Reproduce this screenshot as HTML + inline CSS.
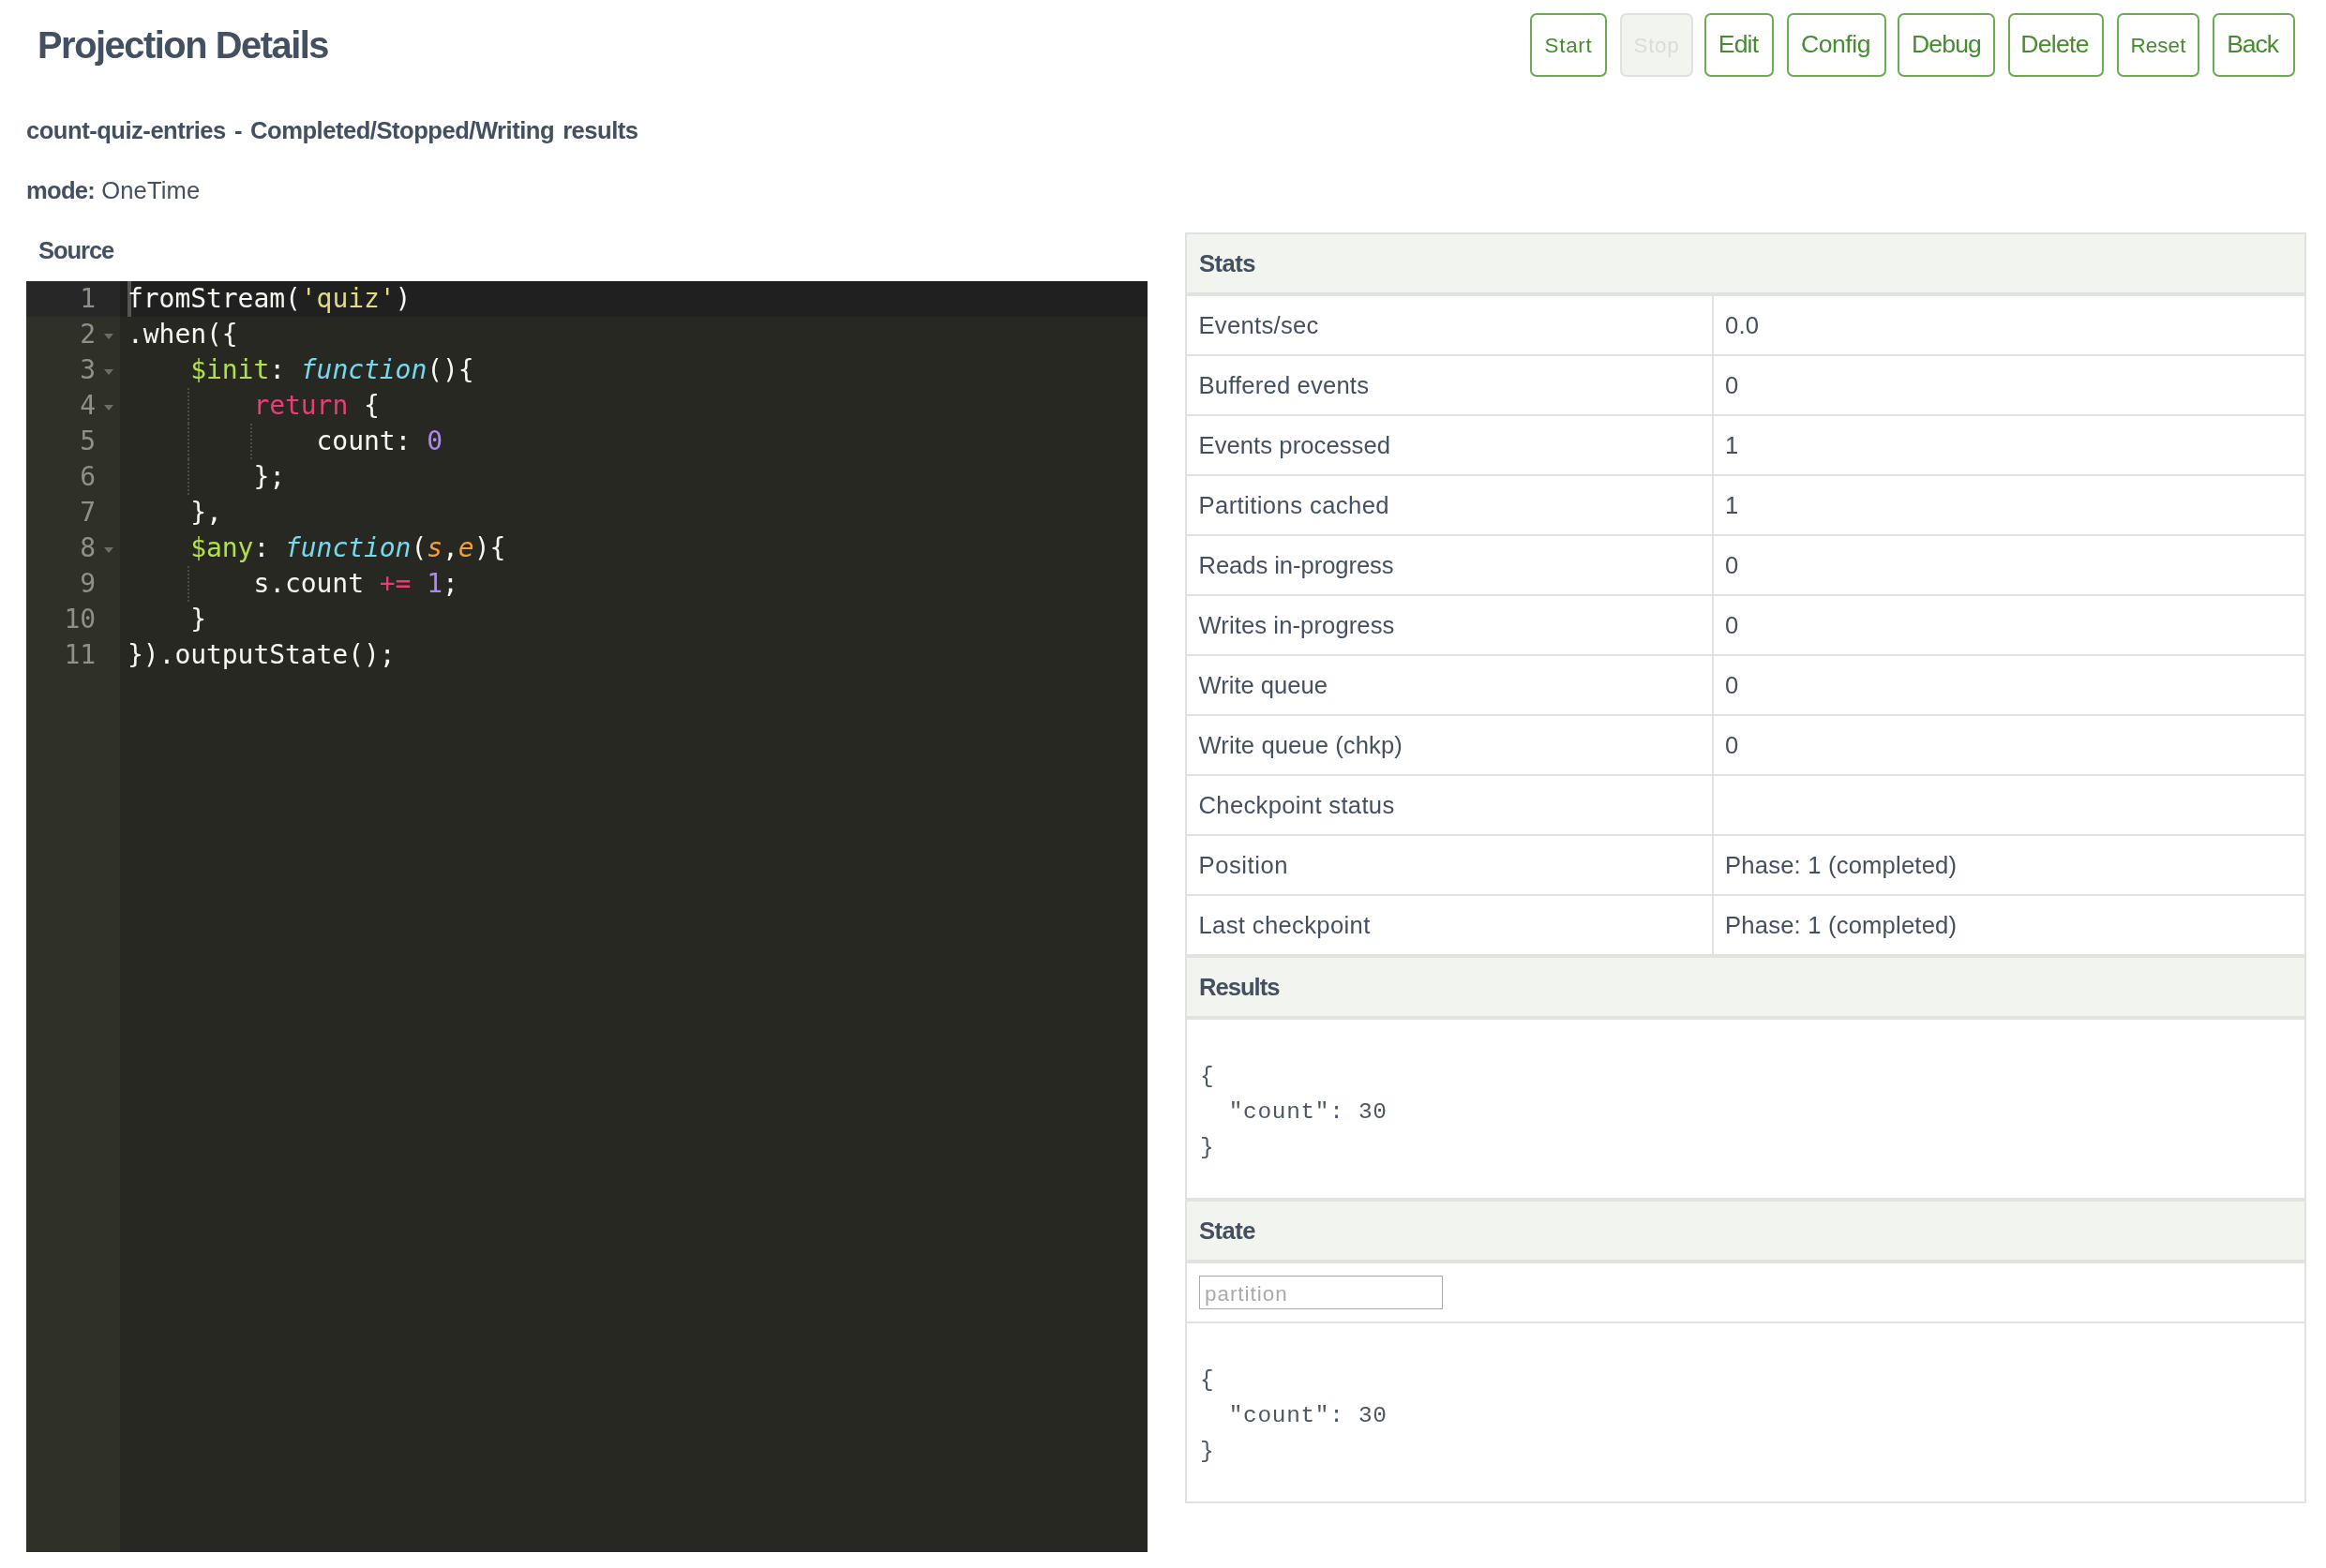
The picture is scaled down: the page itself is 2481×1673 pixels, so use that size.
<!DOCTYPE html>
<html lang="en">
<head>
<meta charset="utf-8">
<title>Projection Details</title>
<style>
html,body{margin:0;padding:0;background:#fff;}
body{width:2481px;height:1673px;position:relative;overflow:hidden;font-family:"Liberation Sans",sans-serif;color:#425061;font-size:25.6px;will-change:transform;}
.abs{position:absolute;white-space:nowrap;}
h1{position:absolute;margin:0;left:40px;top:24px;font-size:39.8px;line-height:48px;font-weight:bold;white-space:nowrap;letter-spacing:-1.45px;}
.sub{left:28px;top:123px;font-weight:bold;line-height:32px;letter-spacing:-0.5px;word-spacing:2.5px;}
.mode{left:28px;top:187px;line-height:32px;letter-spacing:0.1px;}
.mode b{letter-spacing:-0.75px;}
.srcl{left:41px;top:251px;font-weight:bold;line-height:32px;letter-spacing:-1.1px;}
.btn{position:absolute;top:14px;height:64px;box-sizing:content-box;border:2px solid #6aab53;border-radius:7px;color:#468d30;text-align:center;line-height:62px;font-size:26.6px;white-space:nowrap;background:#fff;}
.btn.sm{font-size:22.4px;letter-spacing:0.7px;line-height:66px;}
.btn.dis{background:#f2f4f0;border-color:#dfe2de;color:#d9ddd8;}
/* editor */
.ed{position:absolute;left:28px;top:300px;width:1196px;height:1356px;background:#272822;font-family:"DejaVu Sans Mono","Liberation Mono",monospace;font-size:28px;line-height:38px;color:#f8f8f2;overflow:hidden;letter-spacing:-0.06px;}
.gut{position:absolute;left:0;top:0;width:100px;height:100%;background:#2f3129;color:#8f908a;}
.gut div{height:38px;text-align:right;padding-right:26px;position:relative;}
.gut div.act{background:#272727;}
.gut i{position:absolute;right:7px;top:18px;width:0;height:0;border-left:5.5px solid transparent;border-right:5.5px solid transparent;border-top:6px solid #6c6d67;}
.code{position:absolute;left:108px;top:0;right:0;}
.code div{height:38px;white-space:pre;position:relative;}
.actl{position:absolute;left:100px;top:0;right:0;height:38px;background:#202020;}
.cur{position:absolute;left:108px;top:0;width:4px;height:38px;background:#555552;}
.k{color:#ea3c78}.s{color:#e4da82}.f{color:#76d9f0;font-style:italic}.n{color:#b087f8}.v{color:#b2e04c}.p{color:#f2a03a;font-style:italic}
.ig{position:absolute;top:0;width:2px;height:38px;background-image:repeating-linear-gradient(#4b4c46 0 2px,transparent 2px 4px);}
/* table */
.tb{position:absolute;left:1264px;top:248px;width:1196px;box-sizing:border-box;border:2px solid #dfe2dd;}
.th{height:62px;background:#f2f4ef;border-bottom:4px solid #e0e3de;font-weight:bold;line-height:62px;padding-left:13px;letter-spacing:-0.5px;}
.tr{height:62px;border-bottom:2px solid #e0e3de;position:relative;line-height:62px;}
.tr span{position:absolute;top:0;left:12.5px;}
.tr b{position:absolute;top:0;left:560px;bottom:0;border-left:2px solid #e0e3de;font-weight:normal;padding-left:12px;letter-spacing:0.2px;}
input::placeholder{color:#a9aba8;opacity:1;}
pre{margin:0;font-family:"Liberation Mono",monospace;font-size:24.4px;letter-spacing:0.72px;line-height:38px;padding:0 0 0 14px;color:#4a5767;}
</style>
</head>
<body>
<h1>Projection Details</h1>
<div class="abs sub">count-quiz-entries - Completed/Stopped/Writing results</div>
<div class="abs mode"><b>mode:</b> OneTime</div>
<div class="abs srcl">Source</div>

<div class="btn sm" style="left:1632px;width:78px;">Start</div>
<div class="btn sm dis" style="left:1728px;width:74px;">Stop</div>
<div class="btn" style="left:1818px;width:68px;padding-right:2px;letter-spacing:-0.87px;">Edit</div>
<div class="btn" style="left:1906px;width:100px;padding-right:2px;letter-spacing:-0.46px;">Config</div>
<div class="btn" style="left:2024px;width:100px;letter-spacing:-0.9px;">Debug</div>
<div class="btn" style="left:2142px;width:95px;padding-right:3px;letter-spacing:-0.72px;">Delete</div>
<div class="btn sm" style="left:2258px;width:84px;letter-spacing:0.1px;">Reset</div>
<div class="btn" style="left:2360px;width:81px;padding-right:3px;letter-spacing:-1.1px;">Back</div>

<div class="ed">
  <div class="gut">
    <div class="act">1</div><div>2<i></i></div><div>3<i></i></div><div>4<i></i></div><div>5</div><div>6</div><div>7</div><div>8<i></i></div><div>9</div><div>10</div><div>11</div>
  </div>
  <div class="actl"></div>
  <div class="cur"></div>
  <div class="code">
<div>fromStream(<span class="s">'quiz'</span>)</div>
<div>.when({</div>
<div>    <span class="v">$init</span>: <span class="f">function</span>(){</div>
<div><span class="ig" style="left:64px"></span>        <span class="k">return</span> {</div>
<div><span class="ig" style="left:64px"></span><span class="ig" style="left:131px"></span>            count: <span class="n">0</span></div>
<div><span class="ig" style="left:64px"></span>        };</div>
<div>    },</div>
<div>    <span class="v">$any</span>: <span class="f">function</span>(<span class="p">s</span>,<span class="p">e</span>){</div>
<div><span class="ig" style="left:64px"></span>        s.count <span class="k">+=</span> <span class="n">1</span>;</div>
<div>    }</div>
<div>}).outputState();</div>
  </div>
</div>

<div class="tb">
  <div class="th">Stats</div>
  <div class="tr"><span style="letter-spacing:0.30px">Events/sec</span><b>0.0</b></div>
  <div class="tr"><span style="letter-spacing:0.19px">Buffered events</span><b>0</b></div>
  <div class="tr"><span style="letter-spacing:0.07px">Events processed</span><b>1</b></div>
  <div class="tr"><span style="letter-spacing:0.42px">Partitions cached</span><b>1</b></div>
  <div class="tr"><span style="letter-spacing:-0.06px">Reads in-progress</span><b>0</b></div>
  <div class="tr"><span style="letter-spacing:0.10px">Writes in-progress</span><b>0</b></div>
  <div class="tr"><span style="letter-spacing:0.00px">Write queue</span><b>0</b></div>
  <div class="tr"><span style="letter-spacing:0.09px">Write queue (chkp)</span><b>0</b></div>
  <div class="tr"><span style="letter-spacing:0.33px">Checkpoint status</span><b></b></div>
  <div class="tr"><span style="letter-spacing:0.57px">Position</span><b>Phase: 1 (completed)</b></div>
  <div class="tr" style="border-bottom-width:4px"><span style="letter-spacing:0.35px">Last checkpoint</span><b>Phase: 1 (completed)</b></div>
  <div class="th" style="height:62px;line-height:62px;letter-spacing:-1px;">Results</div>
  <div style="height:190px;border-bottom:4px solid #e0e3de;"><pre style="padding-top:42px">{
  "count": 30
}</pre></div>
  <div class="th" style="height:62px;line-height:62px;">State</div>
  <div style="height:62px;border-bottom:2px solid #e0e3de;position:relative;"><input type="text" placeholder="partition" style="position:absolute;left:13px;top:13px;width:260px;height:36px;box-sizing:border-box;border:1px solid #a9aba8;padding:3px 0 0 5px;margin:0;font-family:'Liberation Sans',sans-serif;font-size:22.4px;letter-spacing:1.0px;color:#425061;background:#fff;outline:none;border-radius:0;"></div>
  <div style="height:190px;"><pre style="padding-top:42px">{
  "count": 30
}</pre></div>
</div>
</body>
</html>
